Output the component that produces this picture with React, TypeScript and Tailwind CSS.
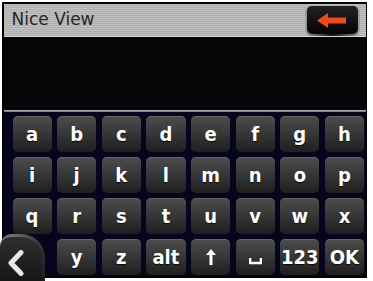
import React from "react";

const rows: string[][] = [
  ["a", "b", "c", "d", "e", "f", "g", "h"],
  ["i", "j", "k", "l", "m", "n", "o", "p"],
  ["q", "r", "s", "t", "u", "v", "w", "x"],
];

const Key = ({ children }: { children: React.ReactNode }) => (
  <div className="flex items-center justify-center rounded-[5px] bg-gradient-to-b from-[#4d4d4d] via-[#363636] to-[#1f1f1f] text-white text-[20px] font-bold leading-none shadow-[inset_0_1px_0_rgba(255,255,255,0.15)] [text-shadow:0_1px_1px_rgba(0,0,0,0.8)]">
    {children}
  </div>
);

const UpArrow = () => (
  <svg width="10" height="16" viewBox="0 0 10 16">
    <path d="M5 0 L10 6 L6.5 6 L6.5 16 L3.5 16 L3.5 6 L0 6 Z" fill="#fff" />
  </svg>
);

const SpaceGlyph = () => (
  <svg width="13" height="16" viewBox="0 0 13 16">
    <path d="M1 9 L1 14 L12 14 L12 9" stroke="#fff" strokeWidth="2.6" fill="none" />
  </svg>
);

const BackArrow = () => (
  <svg width="30" height="15" viewBox="0 0 30 15">
    <path d="M0 7.5 L11 0 L11 4.5 L29 4.5 L29 10.5 L11 10.5 L11 15 Z" fill="#ee4a1e" />
  </svg>
);

export default function App() {
  return (
    <div
      className="w-[373px] h-[281px] bg-white relative overflow-hidden pl-[2px] pt-[2px]"
      style={{ fontFamily: '"DejaVu Sans Condensed", "DejaVu Sans", sans-serif' }}
    >
      <div className="w-[365px] h-[276px] bg-black p-[1.5px] flex flex-col">
        {/* Title bar */}
        <div className="h-[34px] flex items-end justify-between pr-[6px] bg-[repeating-linear-gradient(180deg,#c0c0c0_0px,#c0c0c0_1px,#afafaf_1px,#afafaf_2px)] border-b border-[#d8d8d8]">
          <span
            className="self-center pl-[8px] text-[17px] text-[#262626] leading-none"
            style={{ fontFamily: '"DejaVu Sans", sans-serif' }}
          >
            Nice View
          </span>
          <div className="h-[30px] w-[55px] rounded-[6px] bg-gradient-to-r from-[#a0a0a0] via-[#101010] to-[#a0a0a0] p-[2px] pt-0">
            <div className="h-full w-full rounded-[5px] bg-gradient-to-b from-[#222] to-[#050505] flex items-center justify-center">
              <BackArrow />
            </div>
          </div>
        </div>

        {/* Display */}
        <div className="h-[73px] bg-[#050607]" />
        <div className="h-[2px] bg-gradient-to-b from-[#c0c0c8] to-[#6a6a80]" />

        {/* Keyboard */}
        <div className="flex-1 bg-[#05051c] pl-[9px] pr-[1.5px] pt-[4px] pb-[1px]">
          <div className="grid grid-cols-8 grid-rows-4 gap-x-[5.5px] gap-y-[4.5px] h-[159.5px]">
            {rows.map((r) => r.map((k) => <Key key={k}>{k}</Key>))}
            <div />
            <Key>y</Key>
            <Key>z</Key>
            <Key>alt</Key>
            <Key>
              <UpArrow />
            </Key>
            <Key>
              <SpaceGlyph />
            </Key>
            <Key>123</Key>
            <Key>OK</Key>
          </div>
        </div>
      </div>

      {/* Bottom-left back button */}
      <div className="absolute left-0 top-[234px] w-[45px] h-[50px] rounded-tl-[12px] rounded-tr-[24px] bg-gradient-to-br from-[#8a8a8a] via-[#3a3a3a] to-[#1a1a1a] p-[3px] pl-0 pb-0">
        <div className="w-full h-full rounded-tl-[10px] rounded-tr-[21px] bg-gradient-to-b from-[#2e2e2e] to-[#151515] flex items-center justify-center pr-[12px] pt-[4px]">
          <svg width="17" height="26" viewBox="0 0 17 26">
            <path d="M14 2.5 L4 13 L14 23.5" stroke="#e8e8e8" strokeWidth="5" fill="none" strokeLinecap="round" strokeLinejoin="round" />
          </svg>
        </div>
      </div>
    </div>
  );
}
